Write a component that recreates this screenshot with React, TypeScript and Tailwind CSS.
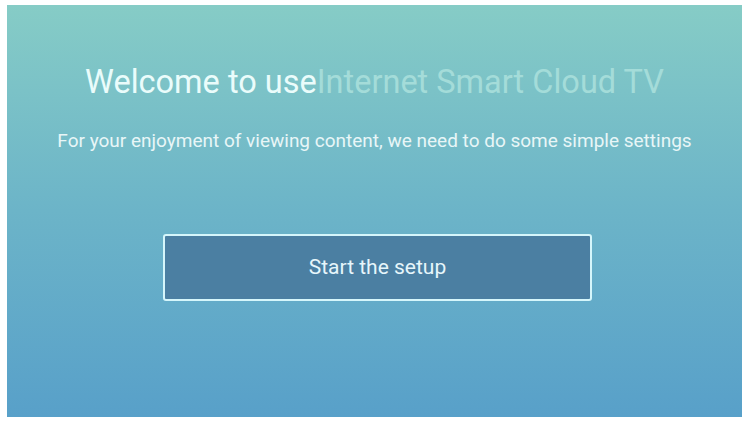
export default function App() {
  return (
    <div className="w-[742px] h-[421px] bg-white pl-[7px] pt-[5px] pb-[4px] overflow-hidden">
      <div
        className="h-full flex flex-col items-center bg-gradient-to-b from-[#86ccc6] via-[#6cb4c8] to-[#58a0c9]"
        style={{ fontFamily: "Roboto, 'Liberation Sans', sans-serif" }}
      >
        <h1 className="mt-[58px] text-[32.5px] leading-[38px] text-[#eafcfb]">
          Welcome to use<span className="text-[#a4dcd9]">Internet Smart Cloud TV</span>
        </h1>
        <p className="mt-[29px] text-[19px] leading-[22px] text-[#e8f6f7]">
          For your enjoyment of viewing content, we need to do some simple settings
        </p>
        <button className="mt-[82px] ml-[6px] w-[429px] h-[67px] rounded-[3px] border-2 border-[#d5f6fb] bg-[#4b7fa2] text-[21px] text-[#e6f6fb]">
          Start the setup
        </button>
      </div>
    </div>
  );
}
